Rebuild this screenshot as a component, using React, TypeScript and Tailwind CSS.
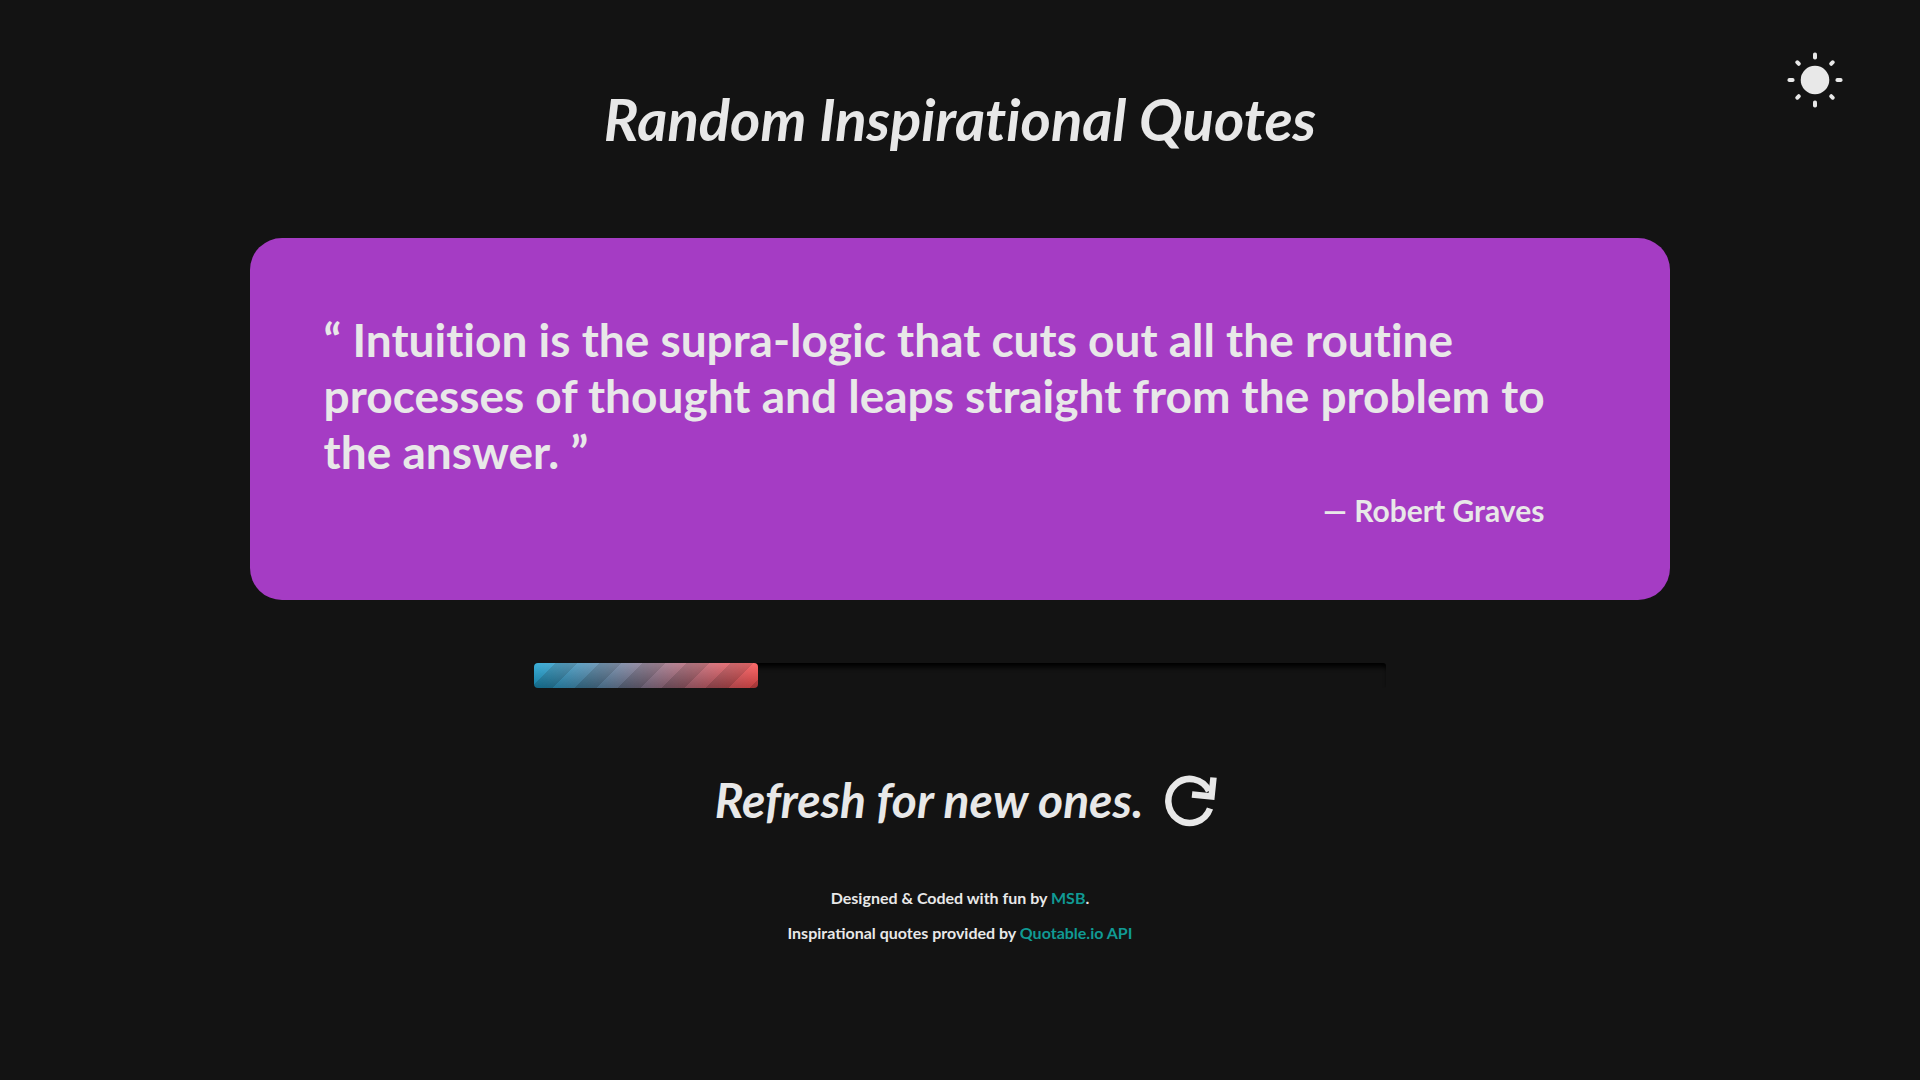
const rays = [0, 45, 90, 135, 180, 225, 270, 315];

function SunIcon() {
  return (
    <svg viewBox="0 0 60 60" className="size-15" aria-hidden="true">
      <circle cx="30" cy="30" r="14.3" fill="currentColor" />
      {rays.map((angle) => (
        <rect
          key={angle}
          x="28"
          y={angle % 90 === 0 ? 2.5 : 3}
          width="4"
          height={angle % 90 === 0 ? 7 : 6}
          rx="1.8"
          fill="currentColor"
          transform={`rotate(${angle} 30 30)`}
        />
      ))}
    </svg>
  );
}

function RefreshIcon() {
  return (
    <svg viewBox="0 0 54 54" className="size-[54px]" fill="none" stroke="currentColor" strokeWidth="6.5" aria-hidden="true">
      <path d="M47 35.5A21.5 22 0 1 1 46 18" />
      <path d="M50.5 4.5L48.5 23.5L29 21.5" strokeWidth="6.5" />
    </svg>
  );
}

export default function App() {
  const progress = 26.3;
  return (
    <div className="relative flex min-h-screen flex-col items-center bg-[#131313] font-['Lato',sans-serif] font-bold text-[#e8e8e8]">
      <button type="button" aria-label="Switch to light theme" className="absolute top-[50px] right-[75px]">
        <SunIcon />
      </button>

      <h1 className="mt-[83px] text-[58px] leading-[72px] italic [font-variant-ligatures:none]">
        Random Inspirational Quotes
      </h1>

      <main className="mt-[83px] flex w-[74%] flex-col items-center">
        <figure className="w-full rounded-[32px] bg-[#a53cc4] px-[74px] pt-[74px] pb-[70px]">
          <blockquote className="text-[46px] leading-[56px] [font-variant-ligatures:none]">
            “ Intuition is the supra-logic that cuts out all the routine processes of thought and leaps straight from the
            problem to the answer. ”
          </blockquote>
          <figcaption className="mt-[10px] pr-[52px] text-right text-[30px] leading-[40px]">— Robert Graves</figcaption>
        </figure>

        <div
          role="progressbar"
          aria-label="Time until the next quote"
          aria-valuenow={progress}
          className="mt-[63px] h-[25px] w-3/5 rounded-[3px] shadow-[inset_0_6px_5px_-2px_#000]"
        >
          <div
            className="h-full rounded-[4px] bg-[linear-gradient(to_bottom,rgba(255,255,255,0.15),rgba(0,0,0,0.25)),repeating-linear-gradient(135deg,transparent_0_15px,rgba(0,0,0,0.15)_15px_31px),linear-gradient(to_right,#1aa3d4,#ff5050)]"
            style={{ width: `${progress}%` }}
          />
        </div>
      </main>

      <button type="button" className="mt-[84px] flex items-center gap-5 pl-3 text-[48px] leading-[56px] italic">
        Refresh for new ones.
        <RefreshIcon />
      </button>

      <footer className="mt-[52px] text-center text-[16px] leading-[35px]">
        <p>
          Designed &amp; Coded with fun by <a href="#msb" className="text-[#109a94]">MSB</a>.
        </p>
        <p>
          Inspirational quotes provided by <a href="#quotable" className="text-[#109a94]">Quotable.io API</a>
        </p>
      </footer>
    </div>
  );
}
